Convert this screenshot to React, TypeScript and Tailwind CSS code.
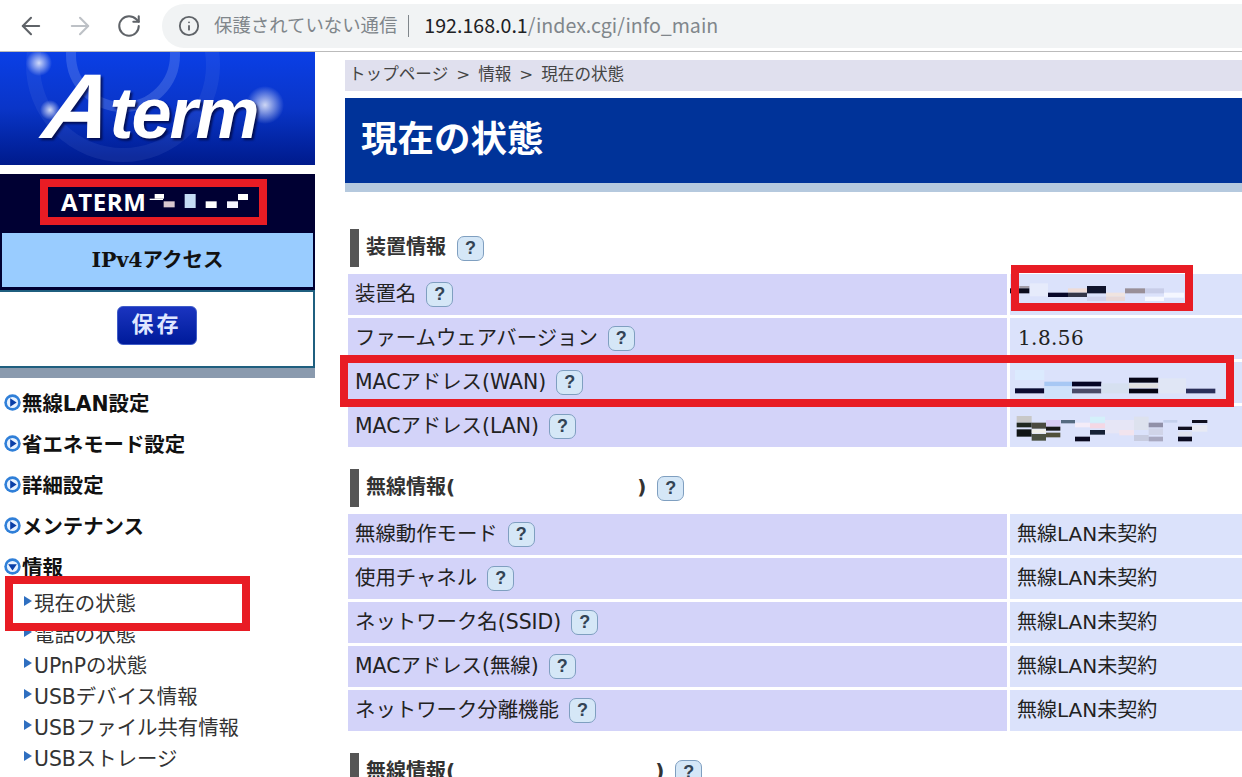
import { ArrowLeft, ArrowRight, RotateCw, Info } from "lucide-react";

type Cell = [number, number, number, number, string];

const sans = "font-['DejaVu_Sans','Noto_Sans_CJK_JP',sans-serif]";

// blurred-out values, coordinates taken from the crop of the right column
const deviceMosaic: Cell[] = [
  [210, 100, 54, 39, "#e6ebfb"], [178, 108, 30, 7, "#a09ca8"], [150, 115, 58, 15, "#0b0b1c"],
  [264, 128, 60, 13, "#060628"], [324, 115, 57, 13, "#eedcd8"], [324, 128, 57, 13, "#343648"],
  [381, 108, 57, 22, "#10142c"], [381, 140, 57, 13, "#d0d3ee"], [438, 128, 57, 12, "#f0e4e0"],
  [438, 140, 57, 13, "#e8d8d8"], [495, 115, 60, 15, "#998f98"], [555, 115, 57, 15, "#c8cde8"],
  [612, 128, 60, 15, "#f4f6ff"], [555, 140, 57, 13, "#f6f8ff"],
];
const wanMosaic: Cell[] = [
  [165, 360, 88, 30, "#dbeafe"], [165, 415, 88, 15, "#0a0a30"], [253, 395, 83, 14, "#a8c8f4"],
  [253, 409, 83, 36, "#cfe2fb"], [336, 395, 88, 14, "#050525"], [336, 416, 88, 14, "#4a4a68"],
  [424, 400, 83, 30, "#d6e0f0"], [507, 383, 88, 15, "#050515"], [507, 400, 88, 14, "#e0e0e0"],
  [507, 416, 88, 14, "#050515"], [595, 385, 83, 45, "#e0e6f5"], [678, 416, 88, 14, "#2a2f5a"],
];
const lanMosaic: Cell[] = [
  [170, 498, 45, 20, "#c8c8c8"], [170, 518, 45, 14, "#202820"], [170, 538, 45, 22, "#101515"],
  [215, 518, 43, 18, "#4a4a40"], [215, 538, 43, 12, "#f0f0e8"], [215, 552, 43, 20, "#4a5040"],
  [258, 510, 43, 20, "#d8ccf4"], [258, 530, 43, 12, "#181818"], [258, 548, 43, 14, "#50503a"],
  [303, 510, 42, 10, "#556a80"], [345, 518, 45, 14, "#f4ecf8"], [345, 560, 45, 14, "#0a0a20"],
  [390, 500, 45, 18, "#d4f0fa"], [390, 520, 45, 15, "#f4d8e4"], [390, 540, 45, 14, "#152035"],
  [435, 510, 87, 40, "#e6e6f6"], [478, 540, 44, 16, "#f2e4ee"], [522, 500, 44, 40, "#dde2ee"],
  [522, 555, 44, 18, "#c8cce0"], [566, 518, 43, 14, "#9090a8"], [566, 535, 43, 20, "#d0d4e8"],
  [566, 560, 43, 14, "#a8a8c0"], [610, 510, 42, 8, "#c4d0ec"],
  [654, 530, 42, 10, "#101020"], [654, 545, 42, 14, "#dfe2ee"], [654, 560, 42, 14, "#0a0a20"],
  [696, 510, 46, 9, "#101020"], [696, 525, 46, 20, "#e8eaf4"],
];

function Mosaic({ cells, y }: { cells: Cell[]; y: number }) {
  return (
    <svg width="232" height="41" viewBox={`150 ${y} 696 123`} className="block">
      {cells.map(([rx, ry, w, h, fill], i) => (
        <rect key={i} x={rx} y={ry} width={w} height={h} fill={fill} />
      ))}
    </svg>
  );
}

function Help() {
  return (
    <span className="inline-flex h-[25px] w-[27px] shrink-0 items-center justify-center rounded-[7px] border border-[#7f9fc0] bg-[#d5e7f7] font-['Liberation_Sans',sans-serif] text-[18px] font-bold text-[#334455]">
      ?
    </span>
  );
}

function Row({ label, value }: { label: string; value: React.ReactNode }) {
  return (
    <>
      <div className="flex h-[41px] items-center bg-[#d3d3f9] pl-[7px] text-[20.4px] text-[#222]">
        <span className="mb-[1px]">{label}</span>
        <span className="ml-[10px] flex">
          <Help />
        </span>
      </div>
      <div className="flex h-[41px] items-center bg-[#dbe2fb] text-[20px] text-[#222]">{value}</div>
    </>
  );
}

function Heading({ children, closeAt }: { children: string; closeAt?: number }) {
  return (
    <div className="ml-[5px] flex h-[38px] items-center border-l-[9px] border-[#555] pl-[7px] text-[20px] font-bold text-[#333]">
      <span className="mb-[3px]">{children}</span>
      {closeAt ? (
        <span style={{ marginLeft: closeAt }} className="mb-[3px]">
          )
        </span>
      ) : null}
      <span className="ml-[11px] flex">
        <Help />
      </span>
    </div>
  );
}

function NavHead({ label, open }: { label: string; open?: boolean }) {
  return (
    <div className="flex h-[41px] items-center pl-[4px] text-[20.4px] font-bold text-[#111]">
      <svg width="17" height="17" viewBox="0 0 17 17" className="mr-px shrink-0">
        <circle cx="8.5" cy="8.5" r="8.2" fill="#2f7fd8" />
        <circle cx="8.5" cy="8.5" r="5.6" fill="#e8f2ff" />
        {open ? <path d="M4.2 6.2h8.6l-4.3 6.4z" fill="#0a3fa8" /> : <path d="M6.2 4.2v8.6l6.4-4.3z" fill="#0a3fa8" />}
      </svg>
      <span className="mt-[4px]">{label}</span>
    </div>
  );
}

function NavSub({ label }: { label: string }) {
  return (
    <div className="flex h-[31px] items-center pl-[24px] text-[20.4px] text-[#333]">
      <svg width="8" height="10" viewBox="0 0 8 10" className="mr-[2px] mb-[4px] shrink-0">
        <path d="M0 0l8 5-8 5z" fill="#2f6fc0" />
      </svg>
      <span className="mt-[4px]">{label}</span>
    </div>
  );
}

function Outline({ className }: { className: string }) {
  return <div className={`pointer-events-none absolute border-[8px] border-[#e81c24] ${className}`} />;
}

export default function App() {
  const noWireless = <span className="mb-[2px] pl-[7px]">無線LAN未契約</span>;

  return (
    <div className={`relative h-[777px] w-[1242px] overflow-hidden bg-white ${sans}`}>
      {/* browser toolbar */}
      <div className="flex h-[52px] items-center border-b border-[#bbb] bg-white font-['Noto_Sans_CJK_JP',sans-serif]">
        <ArrowLeft className="ml-[17px] h-[28px] w-[28px] text-[#5f6368]" strokeWidth={1.8} />
        <ArrowRight className="ml-[21px] h-[28px] w-[28px] text-[#bdc1c6]" strokeWidth={1.8} />
        <RotateCw className="ml-[22px] h-[26px] w-[26px] text-[#5f6368]" strokeWidth={1.9} />
        <div className="ml-[20px] flex h-[44px] flex-1 items-center rounded-l-[22px] bg-[#f1f3f4] pl-[16px]">
          <Info className="h-[22px] w-[22px] text-[#5f6368]" strokeWidth={2} />
          <span className="ml-[14px] mb-[2px] text-[18.4px] text-[#80868b]">保護されていない通信</span>
          <span className="ml-[11px] h-[22px] w-px bg-[#80868b]" />
          <span className="ml-[15px] mb-[2px] text-[19.6px] text-[#80868b]">
            <span className="text-[#202124]">192.168.0.1</span>/index.cgi/info_main
          </span>
        </div>
      </div>

      <div className="flex">
        {/* sidebar */}
        <aside className="w-[315px] shrink-0">
          <div className="relative h-[113px] overflow-hidden bg-gradient-to-b from-[#0a3fe6] via-[#0a35c8] to-[#001a8c]">
            <svg width="315" height="113" viewBox="0 0 315 113" className="absolute inset-0">
              <defs>
                <radialGradient id="glow">
                  <stop offset="0%" stopColor="#fff" stopOpacity="0.8" />
                  <stop offset="100%" stopColor="#fff" stopOpacity="0" />
                </radialGradient>
              </defs>
              <circle cx="123" cy="3" r="52" fill="none" stroke="#9fb8f5" strokeOpacity="0.24" strokeWidth="10" />
              <circle cx="123" cy="13" r="90" fill="none" stroke="#8fa8f0" strokeOpacity="0.1" strokeWidth="14" />
              <circle cx="39" cy="11" r="13" fill="url(#glow)" />
              <circle cx="50" cy="58" r="10" fill="url(#glow)" />
              <circle cx="265" cy="53" r="19" fill="url(#glow)" />
            </svg>
            <div className="absolute left-[46px] top-[1px] flex items-baseline font-['Liberation_Sans',sans-serif] font-bold italic text-white drop-shadow-[2px_2px_1px_rgba(0,0,40,0.7)]">
              <span className="inline-block -skew-x-[10deg] text-[92px] leading-[106px] tracking-[-3px]">A</span>
              <span className="text-[72px] leading-[106px] tracking-[-2px]">term</span>
            </div>
          </div>

          <div className="mt-[9px] bg-[#000033]">
            <div className="flex h-[59px] items-center pl-[61px] text-white">
              <span className="mb-[3px] w-[87px] whitespace-nowrap font-['Open_Sans',sans-serif] text-[24px] font-bold tracking-[0.6px]">
                ATERM
              </span>
              <svg width="104" height="20" viewBox="445 585 312 60" className="mb-[2px]">
                <rect x="465" y="588" width="28" height="14" fill="#fff" />
                <rect x="450" y="602" width="40" height="4" fill="#fff" />
                <rect x="492" y="610" width="33" height="18" fill="#d8c8d0" />
                <rect x="555" y="588" width="33" height="42" fill="#c4dcf4" />
                <rect x="618" y="610" width="33" height="20" fill="#fff" />
                <rect x="682" y="610" width="33" height="20" fill="#f4f4ff" />
                <rect x="715" y="588" width="30" height="18" fill="#fff" />
              </svg>
            </div>
            <div className="mx-[2px] flex h-[57px] items-center justify-center border-b-[3px] border-[#000033] bg-[#99ccff] font-['DejaVu_Serif','Noto_Sans_CJK_JP',serif] text-[20.5px] font-bold text-[#111]">
              IPv4アクセス
            </div>
          </div>
          <div className="flex h-[78px] items-start justify-center border-y-2 border-r-2 border-[#1f5f7f] bg-white pt-[14px]">
            <div className="flex h-[39px] w-[80px] items-center justify-center rounded-[6px] border border-[#3f5cc8] bg-gradient-to-b from-[#1a34c0] to-[#001a9a] text-[22px] font-bold tracking-[3px] text-[#dfe6ff]">
              <span className="mb-[3px]">保存</span>
            </div>
          </div>
          <div className="h-[10px] bg-[#8a9aae]" />

          <nav className="pt-[4px]">
            <NavHead label="無線LAN設定" />
            <NavHead label="省エネモード設定" />
            <NavHead label="詳細設定" />
            <NavHead label="メンテナンス" />
            <NavHead label="情報" open />
            <NavSub label="現在の状態" />
            <NavSub label="電話の状態" />
            <NavSub label="UPnPの状態" />
            <NavSub label="USBデバイス情報" />
            <NavSub label="USBファイル共有情報" />
            <NavSub label="USBストレージ" />
          </nav>
        </aside>

        {/* main column */}
        <main className="ml-[30px] min-w-0 flex-1 pt-[8px]">
          <div className="flex h-[31px] items-center bg-[#e0e0ee] pl-[4px] text-[16.6px] text-[#444]">
            <span className="mb-[1px] flex">
              トップページ
              <span className="mx-[8px]">&gt;</span>
              情報
              <span className="mx-[8px]">&gt;</span>
              現在の状態
            </span>
          </div>
          <div className="mt-[7px] flex h-[85px] items-center bg-[#003399] pl-[16px] text-[36.5px] font-bold text-white">
            <span>現在の状態</span>
          </div>
          <div className="h-[9px] bg-[#b5c9de]" />

          <div className="mt-[37px]">
            <Heading>装置情報</Heading>
            <div className="ml-[3px] mt-[7px] grid grid-cols-[659px_1fr] gap-[3px]">
              <Row label="装置名" value={<Mosaic cells={deviceMosaic} y={72} />} />
              <Row
                label="ファームウェアバージョン"
                value={<span className="mb-[2px] pl-[8px] font-['DejaVu_Serif',serif] text-[20px] tracking-[0.4px]">1.8.56</span>}
              />
              <Row label="MACアドレス(WAN)" value={<Mosaic cells={wanMosaic} y={336} />} />
              <Row label="MACアドレス(LAN)" value={<Mosaic cells={lanMosaic} y={468} />} />
            </div>
          </div>

          <div className="mt-[22px]">
            <Heading closeAt={182}>無線情報(</Heading>
            <div className="ml-[3px] mt-[7px] grid grid-cols-[659px_1fr] gap-[3px]">
              <Row label="無線動作モード" value={noWireless} />
              <Row label="使用チャネル" value={noWireless} />
              <Row label="ネットワーク名(SSID)" value={noWireless} />
              <Row label="MACアドレス(無線)" value={noWireless} />
              <Row label="ネットワーク分離機能" value={noWireless} />
            </div>
          </div>

          <div className="mt-[22px]">
            <Heading closeAt={200}>無線情報(</Heading>
          </div>
        </main>
      </div>

      {/* red annotation boxes drawn over the screenshot */}
      <Outline className="left-[40px] top-[179px] h-[46px] w-[227px]" />
      <Outline className="left-[5px] top-[576px] h-[55px] w-[245px]" />
      <Outline className="left-[1011px] top-[265px] h-[46px] w-[182px]" />
      <Outline className="left-[340px] top-[355px] h-[52px] w-[894px]" />
    </div>
  );
}
